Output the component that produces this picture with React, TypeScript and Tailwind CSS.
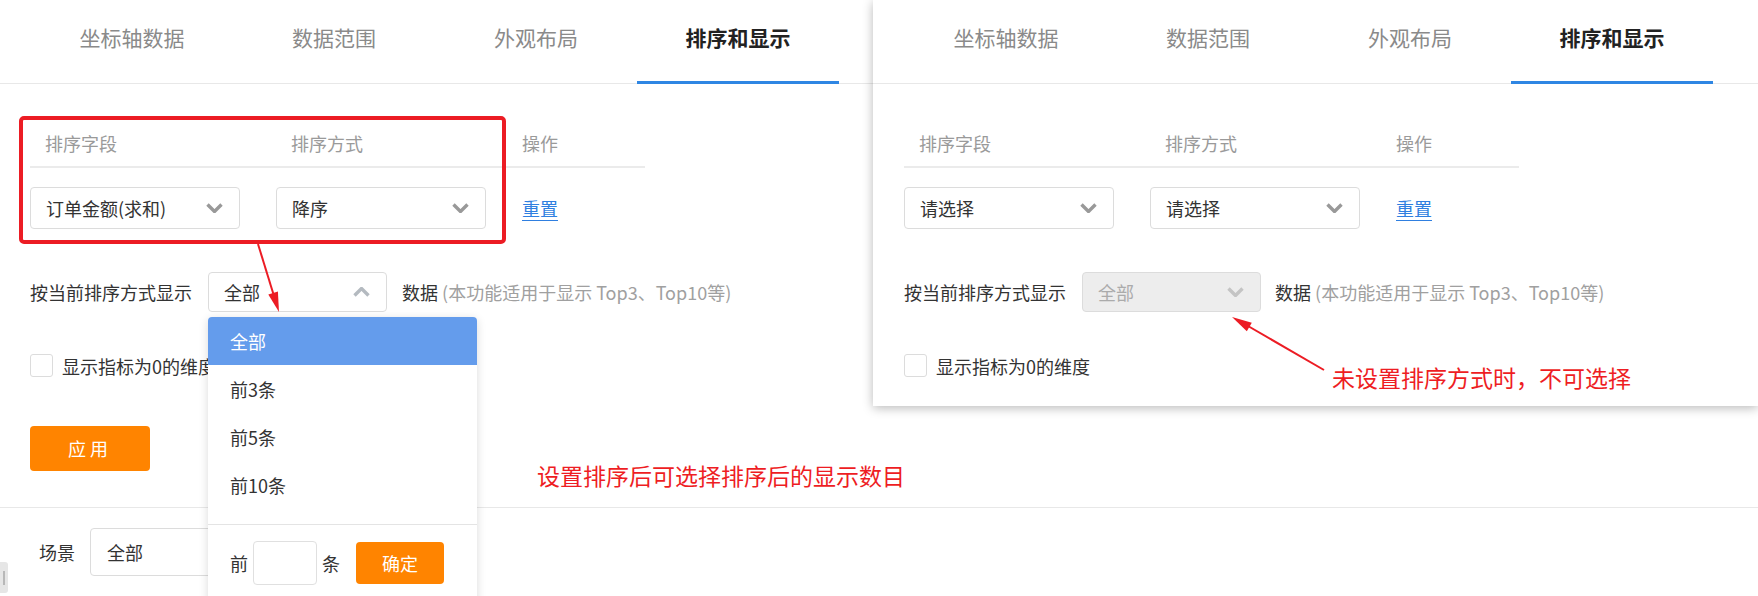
import React from "react";

const tabs = ["坐标轴数据", "数据范围", "外观布局", "排序和显示"];

const Chevron = ({ up = false, color = "#999" }: { up?: boolean; color?: string }) => (
  <svg width="17" height="10" viewBox="0 0 17 10">
    <polyline
      points={up ? "1.5,8.5 8.5,1.5 15.5,8.5" : "1.5,1.5 8.5,8.5 15.5,1.5"}
      fill="none"
      stroke={color}
      strokeWidth="3.4"
    />
  </svg>
);

const Tabs = ({ offset }: { offset: string }) => (
  <div className={`flex h-[84px] border-b border-[#e8e8e8] ${offset}`}>
    {tabs.map((t, i) => (
      <div
        key={t}
        className={`-mb-px flex h-[84px] w-[202px] justify-center pt-[22px] text-[21px] leading-[30px] ${
          i === 3
            ? "border-b-[3px] border-[#2f86e3] font-bold text-[#222]"
            : "text-[#8a8a8a]"
        }`}
      >
        {t}
      </div>
    ))}
  </div>
);

const Select = ({
  value,
  className,
  up = false,
  disabled = false,
}: {
  value: string;
  className: string;
  up?: boolean;
  disabled?: boolean;
}) => (
  <div
    className={`flex items-center justify-between rounded-[4px] border border-[#dcdcdc] pl-[15px] pr-[16px] text-[18px] leading-[24px] ${
      disabled ? "bg-[#ededed] text-[#ababab]" : "bg-white text-[#333]"
    } ${className}`}
  >
    <span>{value}</span>
    <Chevron up={up} color={up ? "#b4bac0" : disabled ? "#c4c4c4" : "#999"} />
  </div>
);

const SortTable = ({ field, order }: { field: string; order: string }) => (
  <div className="w-[615px]">
    <div className="mt-[47px] flex border-b-2 border-[#ebebeb] pb-[11px] text-[18px] leading-[24px] text-[#9a9a9a]">
      <div className="w-[246px] pl-[15px]">排序字段</div>
      <div className="w-[246px] pl-[15px]">排序方式</div>
      <div>操作</div>
    </div>
    <div className="mt-[19px] flex items-center">
      <div className="w-[246px]">
        <Select value={field} className="h-[42px] w-[210px]" />
      </div>
      <div className="w-[246px]">
        <Select value={order} className="h-[42px] w-[210px]" />
      </div>
      <a className="text-[18px] leading-[24px] text-[#2f7fe0] underline underline-offset-4">重置</a>
    </div>
  </div>
);

const ShowLabel = () => (
  <span className="text-[18px] leading-[24px] text-[#333]">按当前排序方式显示</span>
);

const Note = () => (
  <span className="text-[18px] leading-[24px] text-[#333]">
    数据 <span className="text-[#a0a0a0]">(本功能适用于显示 Top3、Top10等)</span>
  </span>
);

const CheckRow = () => (
  <div className="mt-[42px] flex h-[23px] items-center gap-[9px]">
    <div className="h-[23px] w-[23px] rounded-[3px] border border-[#dcdcdc] bg-white" />
    <span className="text-[18px] leading-[24px] text-[#333]">显示指标为0的维度</span>
  </div>
);

const Dropdown = () => (
  <div className="absolute left-0 top-[45px] z-20 w-[269px] rounded-t-[4px] bg-white shadow-[0_2px_10px_rgba(0,0,0,0.15)]">
    <div className="pb-[15px]">
      {["全部", "前3条", "前5条", "前10条"].map((o, i) => (
        <div
          key={o}
          className={`h-[48px] pl-[22px] text-[18px] leading-[48px] ${
            i === 0 ? "rounded-t-[4px] bg-[#649cec] text-white" : "text-[#333]"
          }`}
        >
          {o}
        </div>
      ))}
    </div>
    <div className="flex items-center border-t border-[#e4e4e4] pb-[20px] pl-[22px] pt-[16px] text-[18px] leading-[24px] text-[#333]">
      <span>前</span>
      <div className="ml-[5px] h-[44px] w-[64px] rounded-[4px] border border-[#e0e0e0]" />
      <span className="ml-[5px]">条</span>
      <button className="ml-[16px] h-[42px] w-[88px] rounded-[4px] bg-[#ff8400] text-[18px] text-white">
        确定
      </button>
    </div>
  </div>
);

export default function App() {
  return (
    <div className="relative h-[596px] w-[1758px] overflow-hidden bg-white font-['Noto_Sans_CJK_SC','Microsoft_YaHei',sans-serif]">
      <div className="flex items-start">
        {/* Left screenshot: sort set, list open */}
        <div className="w-[873px] shrink-0">
          <Tabs offset="pl-[31px]" />
          <div className="pl-[30px] pb-[36px]">
            <SortTable field="订单金额(求和)" order="降序" />
            <div className="mt-[43px] flex h-[40px] items-center">
              <ShowLabel />
              <div className="relative ml-[16px] mr-[15px]">
                <Select value="全部" up className="h-[40px] w-[179px]" />
                <Dropdown />
              </div>
              <Note />
            </div>
            <CheckRow />
            <button className="mt-[49px] h-[45px] w-[120px] rounded-[4px] bg-[#ff8400] text-[18px] tracking-[4px] text-white">
              应用
            </button>
          </div>
        </div>

        {/* Right screenshot: sort not set, disabled */}
        <div className="relative z-10 h-[406px] w-[885px] shrink-0 bg-white shadow-[0_2px_10px_rgba(0,0,0,0.28)]">
          <Tabs offset="pl-[32px]" />
          <div className="pl-[31px]">
            <SortTable field="请选择" order="请选择" />
            <div className="mt-[43px] flex h-[40px] items-center">
              <ShowLabel />
              <Select value="全部" disabled className="ml-[16px] mr-[14px] h-[40px] w-[179px]" />
              <Note />
            </div>
            <CheckRow />
          </div>
        </div>
      </div>

      <div className="flex items-center border-t border-[#e8e8e8] pl-[39px] pt-[20px]">
        <span className="text-[18px] leading-[24px] text-[#333]">场景</span>
        <div className="ml-[15px] flex h-[48px] w-[200px] items-center rounded-[4px] border border-[#dcdcdc] pl-[16px] text-[18px] text-[#333]">
          全部
        </div>
      </div>

      {/* scrollbar handle */}
      <div className="absolute left-0 top-[562px] flex h-[31px] w-[8px] items-center justify-center rounded-r-[3px] bg-[#e6e6e6]">
        <div className="h-[14px] w-[2px] bg-[#b8b8b8]" />
      </div>

      {/* annotations */}
      <div className="absolute left-[537px] top-[460px] z-30 text-[23px] leading-[30px] text-[#ee1d23]">
        设置排序后可选择排序后的显示数目
      </div>
      <div className="absolute left-[1332px] top-[362px] z-30 text-[23px] leading-[30px] text-[#ee1d23]">
        未设置排序方式时，不可选择
      </div>
      <svg
        className="pointer-events-none absolute left-0 top-0 z-30"
        width="1758"
        height="596"
        viewBox="0 0 1758 596"
      >
        <rect x="21" y="118" width="483" height="124" rx="3" fill="none" stroke="#ec1c24" strokeWidth="4" />
        <line x1="258" y1="244" x2="274" y2="296" stroke="#ec1c24" strokeWidth="2" />
        <polygon points="279,312 268.3,294.4 277.9,291.4" fill="#ec1c24" />
        <line x1="1324" y1="370" x2="1248" y2="326" stroke="#ec1c24" strokeWidth="2" />
        <polygon points="1232,317 1251.8,322.7 1246.8,331.3" fill="#ec1c24" />
      </svg>
    </div>
  );
}
